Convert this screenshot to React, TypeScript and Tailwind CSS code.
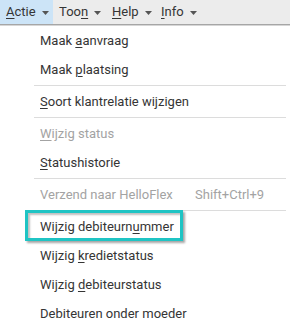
import React from 'react'

type Item =
  | { kind: 'sep' }
  | { kind: 'item'; label: string; mn?: number; disabled?: boolean; shortcut?: string; marked?: boolean }

const items: Item[] = [
  { kind: 'item', label: 'Maak aanvraag', mn: 5 },
  { kind: 'item', label: 'Maak plaatsing', mn: 5 },
  { kind: 'sep' },
  { kind: 'item', label: 'Soort klantrelatie wijzigen', mn: 0 },
  { kind: 'sep' },
  { kind: 'item', label: 'Wijzig status', mn: 0, disabled: true },
  { kind: 'item', label: 'Statushistorie', mn: 0 },
  { kind: 'sep' },
  { kind: 'item', label: 'Verzend naar HelloFlex', disabled: true, shortcut: 'Shift+Ctrl+9' },
  { kind: 'sep' },
  { kind: 'item', label: 'Wijzig debiteurnummer', mn: 16, marked: true },
  { kind: 'item', label: 'Wijzig kredietstatus', mn: 7 },
  { kind: 'item', label: 'Wijzig debiteurstatus', mn: 7 },
  { kind: 'item', label: 'Debiteuren onder moeder' },
]

function Mnemonic({ text, at }: { text: string; at?: number }) {
  if (at === undefined) return <>{text}</>
  return (
    <>
      {text.slice(0, at)}
      <span className="underline underline-offset-[2px] decoration-1">{text[at]}</span>
      {text.slice(at + 1)}
    </>
  )
}

function Arrow() {
  return (
    <svg className="w-[7px] h-[4px] ml-[6px] mt-[1px]" viewBox="0 0 7 4">
      <path d="M0 0h7L3.5 4z" fill="#555" />
    </svg>
  )
}

const menus = [
  { label: 'Actie', mn: 0, active: true, w: 'w-[53px]' },
  { label: 'Toon', mn: 3, w: 'w-[53px]' },
  { label: 'Help', mn: 0, w: 'w-[49px]' },
  { label: 'Info', mn: 0, w: 'w-[53px]' },
]

export default function App() {
  return (
    <div className="w-[290px] h-[328px] bg-white overflow-hidden text-[13px] text-[#353535]" style={{ fontFamily: 'Roboto, "Liberation Sans", sans-serif' }}>
      {/* Menu bar */}
      <div className="h-[24px] bg-[#ececec] flex items-stretch">
        {menus.map((m) => (
          <div
            key={m.label}
            className={`flex items-center pl-[6px] shrink-0 ${m.w} ${m.active ? 'bg-[#cce4f7]' : ''}`}
          >
            <span>
              <Mnemonic text={m.label} at={m.mn} />
            </span>
            <Arrow />
          </div>
        ))}
      </div>
      <div className="h-[1px] bg-[#a6a6a6]" />
      <div className="h-[1px] bg-[#d6d6d6]" />

      {/* Dropdown */}
      <div className="flex flex-col">
        {items.map((it, i) =>
          it.kind === 'sep' ? (
            <div key={i} className="h-[3px] flex items-center pl-[34px] pr-[4px]">
              <div className="h-[1px] w-full bg-[#dcdcdc]" />
            </div>
          ) : (
            <div
              key={i}
              className={`relative h-[29px] flex items-center pl-[40px] ${it.disabled ? 'text-[#a3a3a3]' : ''}`}
            >
              <span className="w-[155px] whitespace-nowrap">
                <Mnemonic text={it.label} at={it.mn} />
              </span>
              {it.shortcut && <span>{it.shortcut}</span>}
              {it.marked && (
                <div className="absolute left-[25px] top-[-2px] w-[158px] h-[31px] border-[3px] border-[#1fc4c4] shadow-[2px_2px_2px_rgba(0,0,0,0.35),inset_2px_2px_2px_rgba(0,0,0,0.25)]" />
              )}
            </div>
          )
        )}
      </div>
    </div>
  )
}
